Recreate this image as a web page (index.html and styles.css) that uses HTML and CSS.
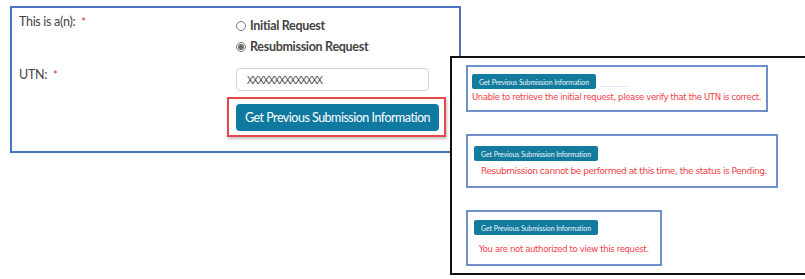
FILE: index.html
```html
<!DOCTYPE html>
<html lang="en">
<head>
  <meta charset="UTF-8" />
  <title>Resubmission Request</title>
  <link rel="stylesheet" href="styles.css">
</head>
<body>

  <!-- Main request form -->
  <div class="form-panel">
    <div class="form-row">
      <div class="label">This is a(n): <span class="req">*</span></div>
      <div class="options">
        <div class="option"><span class="radio"></span>Initial Request</div>
        <div class="option"><span class="radio checked"></span>Resubmission Request</div>
      </div>
    </div>
    <div class="form-row utn-row">
      <div class="label">UTN: <span class="req">*</span></div>
      <div class="controls">
        <div class="text-input">XXXXXXXXXXXXXX</div>
        <div class="highlight">
          <button class="btn">Get Previous Submission Information</button>
        </div>
      </div>
    </div>
  </div>

  <!-- Error messages callout -->
  <div class="callout">
    <div class="msg-box box-utn">
      <div class="msg-top">
        <button class="btn-small">Get Previous Submission Information</button>
        <span class="ghost-line"></span>
      </div>
      <div class="error">Unable to retrieve the initial request, please verify that the UTN is correct.</div>
    </div>
    <div class="msg-box box-pending">
      <button class="btn-small">Get Previous Submission Information</button>
      <div class="error">Resubmission cannot be performed at this time, the status is Pending.</div>
    </div>
    <div class="msg-box box-auth">
      <button class="btn-small">Get Previous Submission Information</button>
      <div class="error">You are not authorized to view this request.</div>
    </div>
  </div>

</body>
</html>
```

FILE: styles.css
```css
body {
  margin: 0;
  padding: 6px 0 0 10px;
  background: #fff;
  font-family: 'Lato', 'Open Sans', sans-serif;
  color: #333;
}
.form-panel {
  width: 447px;
  height: 143px;
  border: 2px solid #4a73c6;
  box-sizing: content-box;
}
.form-row {
  display: grid;
  grid-template-columns: 217px auto;
  padding-left: 7px;
}
.label {
  font-size: 12.5px;
  letter-spacing: -0.3px;
  color: #444;
  padding-top: 6px;
}
.req {
  color: #c0392b;
  margin-left: 3px;
  font-size: 11px;
}
.options {
  padding-top: 7px;
}
.option {
  display: flex;
  align-items: center;
  height: 21px;
  font-size: 12.5px;
  font-weight: 700;
  letter-spacing: -0.3px;
  color: #444;
}
.radio {
  width: 10px;
  height: 10px;
  border: 1px solid #777;
  border-radius: 50%;
  margin-right: 4px;
  box-sizing: border-box;
  display: flex;
  align-items: center;
  justify-content: center;
}
.radio.checked::after {
  content: "";
  width: 6px;
  height: 6px;
  border-radius: 50%;
  background: #6e6e6e;
}
.utn-row .label {
  padding-top: 10px;
}
.controls {
  padding-top: 11px;
}
.text-input {
  width: 193px;
  height: 23px;
  border: 1px solid #d4d4d4;
  border-radius: 4px;
  box-sizing: border-box;
  padding-left: 10px;
  line-height: 21px;
  font-family: 'Open Sans', sans-serif;
  font-size: 11px;
  letter-spacing: -1px;
  color: #444;
}
.highlight {
  display: inline-block;
  margin: 6px 0 0 -9px;
  padding: 5px 5px 4px 7px;
  border: 2px solid #e8474a;
  box-shadow: 1px 2px 3px rgba(0, 0, 0, 0.25);
}
.btn {
  display: block;
  width: 203px;
  height: 27px;
  background: #0f79a0;
  color: #fff;
  border: none;
  border-radius: 4px;
  font-family: 'Lato', sans-serif;
  font-size: 12.5px;
  letter-spacing: -0.5px;
  white-space: nowrap;
  padding: 0;
}
.callout {
  position: absolute;
  left: 450px;
  top: 56px;
  width: 344px;
  height: 208px;
  border: 2px solid #111;
  background: #fff;
  padding: 7px 0 0 14px;
  box-sizing: content-box;
  display: flex;
  flex-direction: column;
  align-items: flex-start;
  gap: 22px;
  font-family: 'DejaVu Sans', sans-serif;
}
.msg-box {
  border: 2px solid #6d90cb;
  box-sizing: border-box;
  padding: 7px 4px 0;
}
.box-utn {
  width: 302px;
  height: 47px;
}
.box-pending {
  width: 312px;
  height: 54px;
  padding: 10px 6px 0;
}
.box-auth {
  width: 196px;
  height: 56px;
  padding: 8px 6px 0;
}
.msg-top {
  display: flex;
  align-items: flex-end;
}
.ghost-line {
  width: 28px;
  height: 1px;
  margin: 0 0 2px 4px;
  background: #dbe6f2;
}
.btn-small {
  display: block;
  width: 124px;
  height: 15px;
  background: #137b9d;
  color: #eef6f9;
  border: none;
  border-radius: 2px;
  font-family: 'Lato', sans-serif;
  font-size: 7px;
  letter-spacing: -0.1px;
  white-space: nowrap;
  padding: 0;
}
.error {
  color: #f0404a;
  font-size: 8.5px;
  letter-spacing: -0.35px;
  white-space: nowrap;
}
.box-utn .error {
  margin-top: 3px;
}
.box-pending .error {
  margin-top: 5px;
  padding-left: 7px;
  font-size: 9px;
  letter-spacing: -0.45px;
}
.box-auth .error {
  margin-top: 9px;
  padding-left: 5px;
}
```
